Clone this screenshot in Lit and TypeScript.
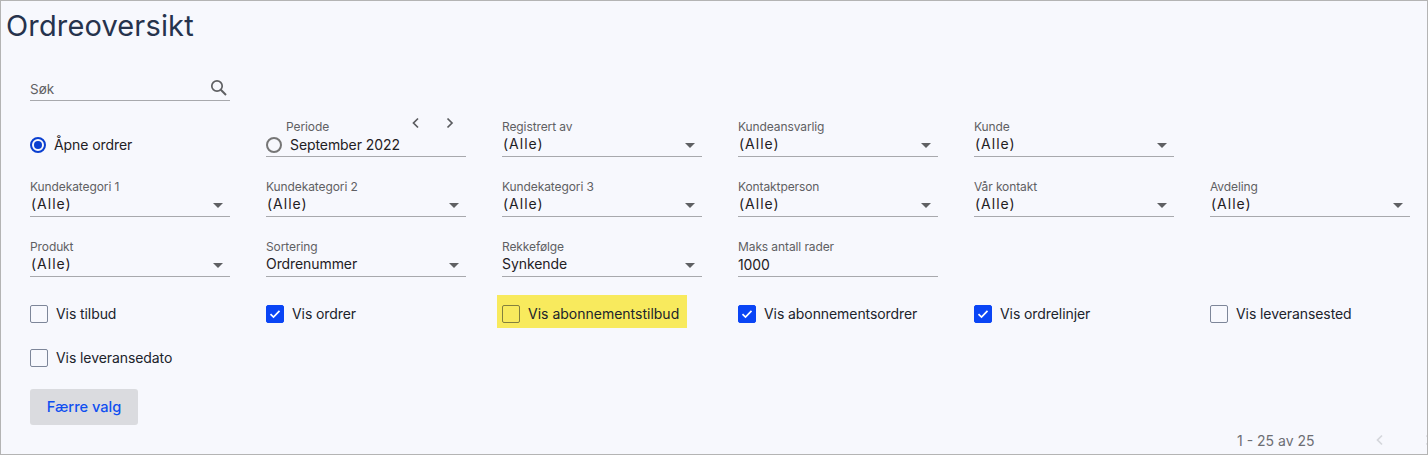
import { LitElement, html, css, nothing } from "lit";
import { customElement } from "lit/decorators.js";

type F = { label: string; value: string; kind?: "select" | "input" };

const row2: F[] = [
  { label: "Kundekategori 1", value: "(Alle)" },
  { label: "Kundekategori 2", value: "(Alle)" },
  { label: "Kundekategori 3", value: "(Alle)" },
  { label: "Kontaktperson", value: "(Alle)" },
  { label: "Vår kontakt", value: "(Alle)" },
  { label: "Avdeling", value: "(Alle)" },
];
const row3: F[] = [
  { label: "Produkt", value: "(Alle)" },
  { label: "Sortering", value: "Ordrenummer" },
  { label: "Rekkefølge", value: "Synkende" },
  { label: "Maks antall rader", value: "1000", kind: "input" },
];
const row1: F[] = [
  { label: "Registrert av", value: "(Alle)" },
  { label: "Kundeansvarlig", value: "(Alle)" },
  { label: "Kunde", value: "(Alle)" },
];
const checks: { label: string; on?: boolean; hl?: boolean }[] = [
  { label: "Vis tilbud" },
  { label: "Vis ordrer", on: true },
  { label: "Vis abonnementstilbud", hl: true },
  { label: "Vis abonnementsordrer", on: true },
  { label: "Vis ordrelinjer", on: true },
  { label: "Vis leveransested" },
  { label: "Vis leveransedato" },
];

@customElement("app-root")
export class AppRoot extends LitElement {
  static styles = css`
    :host {
      display: block;
      width: 1428px;
      height: 455px;
      box-sizing: border-box;
      overflow: hidden;
      background: #f7f8fd;
      border: 1px solid #b4b4b4;
      font-family: Inter, "Liberation Sans", sans-serif;
      color: #20232b;
    }
    h1 {
      margin: 0;
      padding: 8px 0 0 5px;
      height: 33px;
      font-size: 29px;
      line-height: 33px;
      font-weight: 400;
      color: #26334d;
      letter-spacing: 0.15px;
    }
    .body {
      padding: 35px 0 0 29px;
    }
    .search {
      width: 200px;
      height: 24px;
      box-sizing: border-box;
      border-bottom: 1px solid #a8a9ad;
      display: flex;
      align-items: center;
      justify-content: space-between;
      font-size: 13.5px;
      color: #5f6063;
    }
    .search svg { display: block; margin: -1px 2px 0 0; }
    .grid {
      margin-top: 19px;
      display: grid;
      grid-template-columns: repeat(6, 200px);
      column-gap: 36px;
      row-gap: 23px;
    }
    .field {
      height: 37px;
      box-sizing: border-box;
      border-bottom: 1px solid #a8a9ad;
      display: flex;
      flex-direction: column;
      position: relative;
    }
    .label {
      font-size: 12px;
      line-height: 15px;
      letter-spacing: -0.1px;
      color: #5f6063;
      height: 16px;
      margin-top: -1px;
    }
    .value {
      font-size: 14px;
      line-height: 19px;
      letter-spacing: -0.08px;
      color: #1f2024;
      display: flex;
      align-items: center;
      justify-content: space-between;
    }
    .value.select { margin-top: -1px; }
    .paren { padding: 0 1px; letter-spacing: 1px; }
    .caret {
      width: 0;
      height: 0;
      border-left: 5px solid transparent;
      border-right: 5px solid transparent;
      border-top: 5px solid #5f6063;
      margin-right: 7px;
      margin-top: 3px;
    }
    .radio-line {
      display: flex;
      align-items: center;
      gap: 8px;
      height: 37px;
      font-size: 14px;
      letter-spacing: -0.08px;
      color: #1f2024;
      padding-top: 13px;
      box-sizing: border-box;
    }
    .radio-line span:last-child, .check .text { padding-bottom: 1px; }
    .radio {
      width: 16px;
      height: 16px;
      box-sizing: border-box;
      border: 2px solid #767676;
      border-radius: 50%;
      flex: none;
      display: flex;
      align-items: center;
      justify-content: center;
    }
    .radio.on { border-color: #0a3fd0; }
    .radio.on::after {
      content: "";
      width: 8px;
      height: 8px;
      border-radius: 50%;
      background: #0a3fd0;
    }
    .period .label { padding-left: 20px; display: flex; }
    .period .value { justify-content: flex-start; gap: 8px; }
    .period .nav {
      position: absolute;
      right: 0;
      top: -3px;
      display: flex;
      gap: 24px;
      padding-right: 11px;
    }
    .checks {
      margin-top: 28px;
      display: grid;
      grid-template-columns: repeat(6, 200px);
      column-gap: 36px;
      row-gap: 26px;
    }
    .check {
      display: flex;
      align-items: center;
      gap: 8px;
      height: 18px;
      font-size: 14px;
      letter-spacing: -0.08px;
      color: #20232b;
      white-space: nowrap;
      position: relative;
      z-index: 0;
    }
    .check.hl .text { letter-spacing: 0; }
    .check.hl::before {
      content: "";
      position: absolute;
      z-index: -1;
      left: -5px;
      top: -10px;
      width: 190px;
      height: 33px;
      background: #f8ea5d;
    }
    .box {
      width: 18px;
      height: 18px;
      box-sizing: border-box;
      border: 1px solid #7d8699;
      border-radius: 2px;
      flex: none;
      display: flex;
      align-items: center;
      justify-content: center;
    }
    .hl .box { border-color: #83803e; }
    .box.on { background: #0a45f5; border-color: #0a45f5; }
    button {
      display: block;
      margin-top: 22px;
      width: 108px;
      height: 36px;
      border: 0;
      border-radius: 3px;
      background: #dadbdf;
      color: #0f4ff0;
      font: 500 14.6px Inter, "Liberation Sans", sans-serif;
      padding: 0;
    }
    .pager {
      display: flex;
      justify-content: flex-end;
      align-items: center;
      height: 20px;
      margin-top: 5px;
      font-size: 14px;
      color: #6d6e73;
      white-space: nowrap;
    }
    .pager .count { width: 138px; flex: none; }
    .pager .chev { flex: none; width: 49px; }
    .pager .chev svg { display: block; }
    .pager .chev:last-child { width: 3px; overflow: hidden; }
  `;

  private chevron(dir: "l" | "r", color: string) {
    const d = dir === "l" ? "M7 1.5 2.5 6 7 10.5" : "M2.5 1.5 7 6 2.5 10.5";
    return html`<svg width="10" height="12" viewBox="0 0 10 12" fill="none" stroke=${color} stroke-width="1.7"><path d=${d}></path></svg>`;
  }

  private field(f: F) {
    const input = f.kind === "input";
    return html`<div class="field">
      <div class="label">${f.label}</div>
      <div class="value ${input ? "" : "select"}">
        <span class=${f.value === "(Alle)" ? "paren" : ""}>${f.value}</span>
        ${input ? nothing : html`<span class="caret"></span>`}
      </div>
    </div>`;
  }

  render() {
    return html`
      <h1>Ordreoversikt</h1>
      <div class="body">
        <div class="search">
          <span>Søk</span>
          <svg width="18" height="18" viewBox="0 0 18 18" fill="none" stroke="#5f6063" stroke-width="1.7">
            <circle cx="7" cy="7" r="5.2"></circle>
            <path d="M10.8 10.8 16 16" stroke-width="2"></path>
          </svg>
        </div>
        <div class="grid">
          <div class="radio-line"><span class="radio on"></span><span>Åpne ordrer</span></div>
          <div class="field period">
            <div class="label">Periode</div>
            <div class="nav">${this.chevron("l", "#5a5b5f")}${this.chevron("r", "#5a5b5f")}</div>
            <div class="value"><span class="radio"></span><span>September 2022</span></div>
          </div>
          ${row1.map((f) => this.field(f))}
          <div></div>
          ${row2.map((f) => this.field(f))}
          ${row3.map((f) => this.field(f))}
        </div>
        <div class="checks">
          ${checks.map(
            (c) => html`<div class="check ${c.hl ? "hl" : ""}">
              <span class="box ${c.on ? "on" : ""}">
                ${c.on
                  ? html`<svg width="12" height="10" viewBox="0 0 12 10" fill="none" stroke="#fff" stroke-width="1.7"><path d="M1.5 5.2 4.5 8 10.5 1.8"></path></svg>`
                  : nothing}
              </span>
              <span class="text">${c.label}</span>
            </div>`
          )}
        </div>
        <button>Færre valg</button>
        <div class="pager">
          <span class="count">1 - 25 av 25</span>
          <span class="chev">${this.chevron("l", "#d5d7dc")}</span>
          <span class="chev">${this.chevron("r", "#d5d7dc")}</span>
        </div>
      </div>
    `;
  }
}
